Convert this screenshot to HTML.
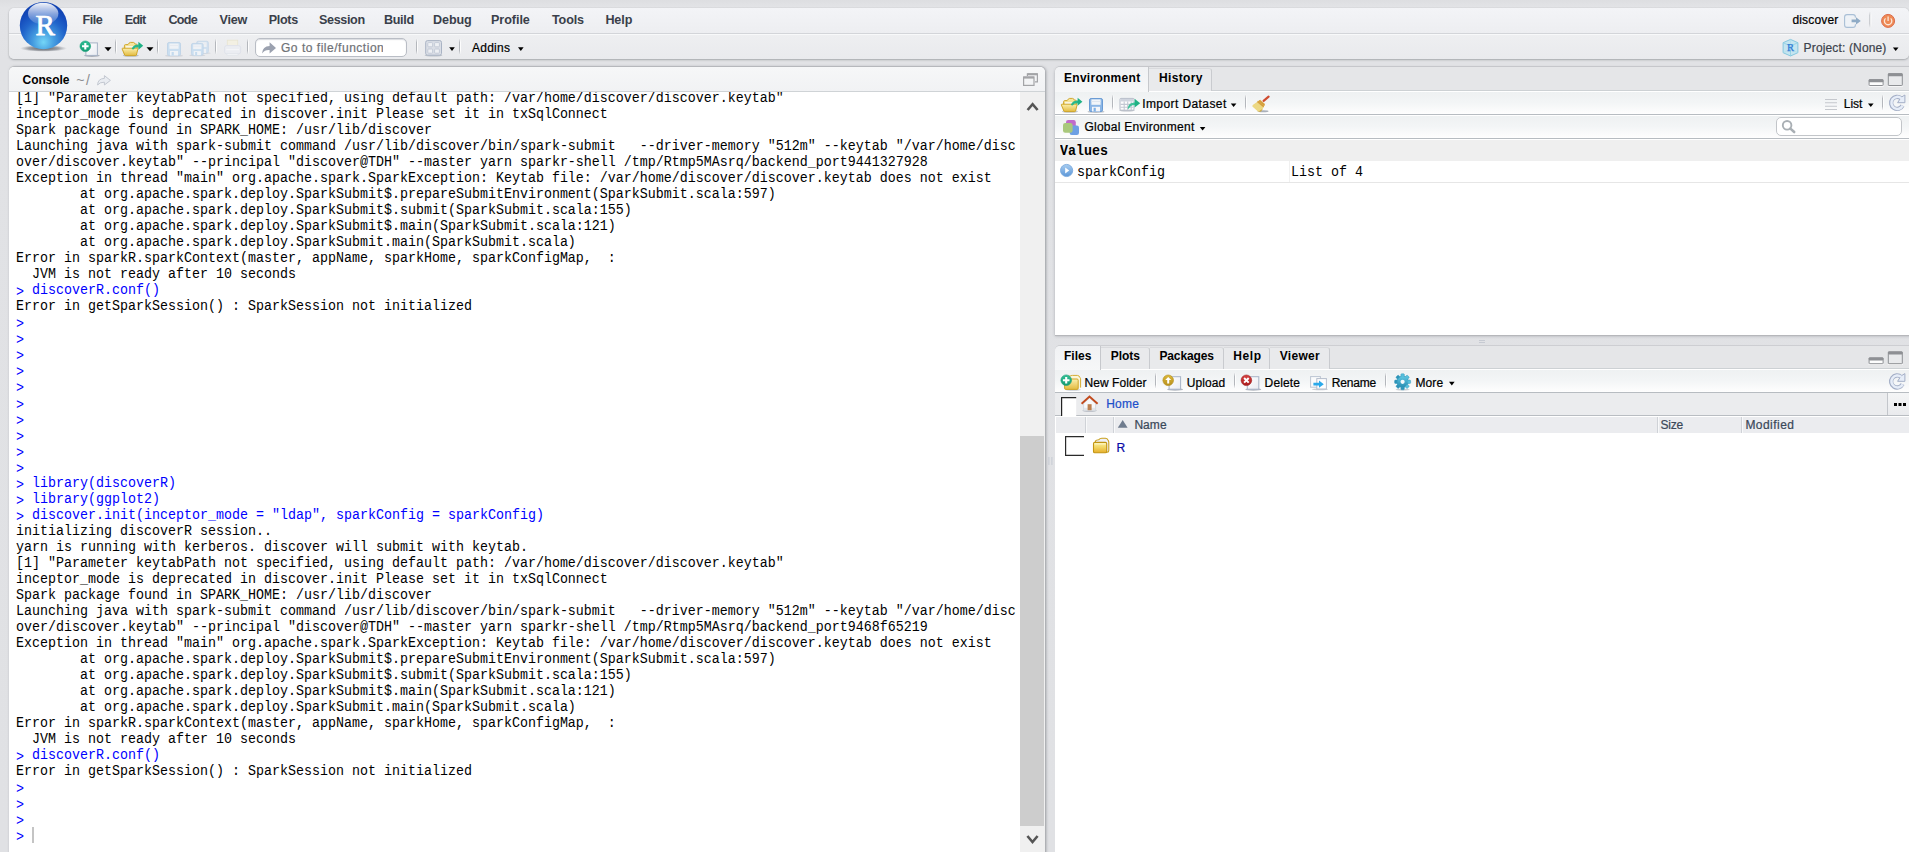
<!DOCTYPE html>
<html>
<head>
<meta charset="utf-8">
<title>RStudio</title>
<style>
*{box-sizing:border-box;margin:0;padding:0}
html,body{width:1909px;height:852px;overflow:hidden}
body{position:relative;font-family:"Liberation Sans",sans-serif;font-size:12px;color:#000;
 background:linear-gradient(to bottom,#dddee1 0,#e3e4e7 8px,#e1e2e5 60px,#e0e1e4 100%);}
.abs{position:absolute}
.t{position:absolute;white-space:pre;line-height:16px}
.b{font-weight:bold}
/* top toolbar */
#tb{left:9px;top:8px;width:1900px;height:51px;border-radius:5px;background:linear-gradient(to bottom,#f3f4f7 0,#edeef1 25px,#eeeff1 26px,#e9eaed 100%);box-shadow:0 1px 2px rgba(120,124,130,.55),0 0 1px rgba(140,144,150,.5)}
#tbline{left:9px;top:33px;width:1900px;height:1px;background:#d3d5d9}
#tbline2{left:9px;top:34px;width:1900px;height:1px;background:#f8f9fa}
.menu{font-size:12.6px;font-weight:bold;color:#3a3f4a}
.s12{font-size:12px;-webkit-text-stroke:.22px currentColor}
.s12b{font-size:12px;font-weight:bold}
.s14{font-size:14px}
.sep{position:absolute;width:1px;background:#cfd1d5}
/* panels */
.panel{position:absolute;background:#fff;overflow:hidden}
.hdr{position:absolute;left:0;top:0;right:0}
.mono{font-family:"Liberation Mono",monospace;font-size:13.33px;transform:scaleY(1.1);transform-origin:0 100%}
#con{left:9px;top:67px;width:1036px;height:800px;border-radius:5px 5px 0 0;box-shadow:1px 0 3px rgba(100,104,110,.6),0 -1px 0 #cdced2}
#conhdr{height:25px;background:linear-gradient(to bottom,#f6f7f8,#f1f2f4);border-bottom:1px solid #cfd3d6}
#context{position:absolute;left:7px;top:25px;width:1010px;height:780px;overflow:hidden}
#context pre{position:absolute;left:0;top:-1.8px;font-family:"Liberation Mono",monospace;font-size:13.33px;line-height:15px;color:#000;transform:scaleY(1.0688);transform-origin:0 0}
#context pre i{font-style:normal;color:#0000ff}
#context pre b{font-weight:normal;position:relative;top:1.6px}
#sb{position:absolute;left:1011px;top:25px;width:25px;height:780px;background:#f0f0f0}
#thumb{position:absolute;left:0;top:344px;width:24px;height:390px;background:#cdcdcd}
.tabbar{position:absolute;left:0;top:0;right:0;height:24px;background:#e5e6e8;border-bottom:1px solid #cdd1d4}
.tab{position:absolute;top:1px;height:23px;border-right:1px solid #c9cbcf;border-top:1px solid #d9dadd;border-radius:0 3px 0 0;background:#e9eaec}
.tab.act{background:linear-gradient(to bottom,#f1f2f4,#f6f7f8);height:25px;top:0;border-top:none;border-radius:4px 0 0 0;z-index:2;border-right:none;box-shadow:1px 0 0 #c6c8cc}
.tool{position:absolute;left:0;right:0;background:linear-gradient(to bottom,#fff 0,#fff 1px,#eef1f2 1px,#f3f5f6 50%,#fdfdfd 95%,#fff 100%);border-bottom:1px solid #b7bcc1}
.colsep{position:absolute;top:71px;width:2px;height:16px;background:linear-gradient(to right,#cfd2d7 0,#cfd2d7 50%,#f8f9fa 50%,#f8f9fa 100%)}
</style>
</head>
<body>
<div class="abs" id="tb"></div>
<div class="abs" id="tbline"></div>
<div class="abs" id="tbline2"></div>

<div class="abs" style="left:255px;top:38px;width:152px;height:19px;border:1px solid #b9bdc5;border-radius:5px;background:#fff;box-shadow:inset 0 1px 1px rgba(150,155,165,.35)"></div>
<div class="panel" id="con">
 <div class="hdr" id="conhdr"></div>
  <div id="context"><pre>[1] "Parameter keytabPath not specified, using default path: /var/home/discover/discover.keytab"
inceptor_mode is deprecated in discover.init Please set it in txSqlConnect
Spark package found in SPARK_HOME: /usr/lib/discover
Launching java with spark-submit command /usr/lib/discover/bin/spark-submit   --driver-memory "512m" --keytab "/var/home/disc
over/discover.keytab" --principal "discover@TDH" --master yarn sparkr-shell /tmp/Rtmp5MAsrq/backend_port9441327928
Exception in thread "main" org.apache.spark.SparkException: Keytab file: /var/home/discover/discover.keytab does not exist
        at org.apache.spark.deploy.SparkSubmit$.prepareSubmitEnvironment(SparkSubmit.scala:597)
        at org.apache.spark.deploy.SparkSubmit$.submit(SparkSubmit.scala:155)
        at org.apache.spark.deploy.SparkSubmit$.main(SparkSubmit.scala:121)
        at org.apache.spark.deploy.SparkSubmit.main(SparkSubmit.scala)
Error in sparkR.sparkContext(master, appName, sparkHome, sparkConfigMap,  :
  JVM is not ready after 10 seconds
<i><b>&gt;</b> discoverR.conf()</i>
Error in getSparkSession() : SparkSession not initialized
<i><b>&gt;</b></i>
<i><b>&gt;</b></i>
<i><b>&gt;</b></i>
<i><b>&gt;</b></i>
<i><b>&gt;</b></i>
<i><b>&gt;</b></i>
<i><b>&gt;</b></i>
<i><b>&gt;</b></i>
<i><b>&gt;</b></i>
<i><b>&gt;</b></i>
<i><b>&gt;</b> library(discoverR)</i>
<i><b>&gt;</b> library(ggplot2)</i>
<i><b>&gt;</b> discover.init(inceptor_mode = "ldap", sparkConfig = sparkConfig)</i>
initializing discoverR session..
yarn is running with kerberos. discover will submit with keytab.
[1] "Parameter keytabPath not specified, using default path: /var/home/discover/discover.keytab"
inceptor_mode is deprecated in discover.init Please set it in txSqlConnect
Spark package found in SPARK_HOME: /usr/lib/discover
Launching java with spark-submit command /usr/lib/discover/bin/spark-submit   --driver-memory "512m" --keytab "/var/home/disc
over/discover.keytab" --principal "discover@TDH" --master yarn sparkr-shell /tmp/Rtmp5MAsrq/backend_port9468f65219
Exception in thread "main" org.apache.spark.SparkException: Keytab file: /var/home/discover/discover.keytab does not exist
        at org.apache.spark.deploy.SparkSubmit$.prepareSubmitEnvironment(SparkSubmit.scala:597)
        at org.apache.spark.deploy.SparkSubmit$.submit(SparkSubmit.scala:155)
        at org.apache.spark.deploy.SparkSubmit$.main(SparkSubmit.scala:121)
        at org.apache.spark.deploy.SparkSubmit.main(SparkSubmit.scala)
Error in sparkR.sparkContext(master, appName, sparkHome, sparkConfigMap,  :
  JVM is not ready after 10 seconds
<i><b>&gt;</b> discoverR.conf()</i>
Error in getSparkSession() : SparkSession not initialized
<i><b>&gt;</b></i>
<i><b>&gt;</b></i>
<i><b>&gt;</b></i>
<i><b>&gt;</b></i></pre></div>
 <div class="abs" style="left:23px;top:760px;width:2px;height:16px;background:#c4c4c4"></div>
 <div id="sb"><div id="thumb"></div></div>
</div>
<div class="panel" id="env" style="left:1055px;top:67px;width:860px;height:268px;border-radius:5px 0 0 0;box-shadow:0 1px 0 #b6b7bb,0 1px 3px rgba(100,104,110,.45),0 -1px 0 #cdced2">
 <div class="tabbar"></div>
 <div class="tab act" style="left:0;width:93px"></div>
 <div class="tab" style="left:94px;width:63px"></div>
 <div class="tool" style="top:24px;height:24px"></div>
 <div class="tool" style="top:48px;height:24px"></div>
 <div class="abs" style="left:721px;top:50px;width:126px;height:19px;border:1px solid #c2c5c9;border-radius:5px;background:#fff"></div>
 <div class="abs" style="left:0;top:73px;right:0;height:21px;background:#efefef"></div>
 <span class="t mono b" style="left:5px;top:77.5px">Values</span>
 <div class="abs" style="left:0;top:115px;right:0;height:1px;background:#e6e6e6"></div>
 <div class="abs" style="left:234px;top:94px;width:1px;height:21px;background:#f0f0f0"></div>
 <span class="t mono" style="left:22px;top:99px">sparkConfig</span>
 <span class="t mono" style="left:236px;top:99px">List of 4</span>
</div>
<div class="panel" id="files" style="left:1055px;top:346px;width:860px;height:520px;border-radius:5px 0 0 0;box-shadow:0 -1px 0 #cdced2">
 <div class="tabbar" style="height:23px"></div>
 <div class="tab act" style="left:0;width:45px;height:24px"></div>
 <div class="tab" style="left:46px;width:49px;height:22px"></div>
 <div class="tab" style="left:95px;width:74px;height:22px"></div>
 <div class="tab" style="left:169px;width:46px;height:22px"></div>
 <div class="tab" style="left:215px;width:60px;height:22px"></div>
 <div class="tool" style="top:23px;height:24px"></div>
 <div class="abs" style="left:0;top:47px;right:0;height:23px;background:#ebecee;border-bottom:1px solid #b9bdc2"></div>
 <div class="abs" style="left:832px;top:47px;width:30px;height:22px;border-left:1px solid #c3c6cb;background:linear-gradient(to bottom,#f4f5f6,#e9eaed)"></div>
 <div class="abs" style="left:839px;top:57px;width:3px;height:3px;background:#000;box-shadow:4.5px 0 0 #000,9px 0 0 #000"></div>
 <div class="abs" style="left:1px;top:71px;right:0;height:16px;background:#ebecef"></div>
 <div class="colsep" style="left:30px"></div><div class="colsep" style="left:58px"></div><div class="colsep" style="left:602px"></div><div class="colsep" style="left:686px"></div>
</div>
<div id="textlayer" style="position:relative;z-index:5">
<span class="t menu" id="m_file" style="left:82.40px;top:11.90px;letter-spacing:-0.420px">File</span>
<span class="t menu" id="m_edit" style="left:124.80px;top:11.90px;letter-spacing:-0.810px">Edit</span>
<span class="t menu" id="m_code" style="left:168.40px;top:11.90px;letter-spacing:-0.720px">Code</span>
<span class="t menu" id="m_view" style="left:219.40px;top:11.90px;letter-spacing:-0.150px">View</span>
<span class="t menu" id="m_plots" style="left:268.80px;top:11.90px;letter-spacing:-0.360px">Plots</span>
<span class="t menu" id="m_session" style="left:319.00px;top:11.90px;letter-spacing:-0.360px">Session</span>
<span class="t menu" id="m_build" style="left:384.00px;top:11.90px;letter-spacing:-0.338px">Build</span>
<span class="t menu" id="m_debug" style="left:433.00px;top:11.90px;letter-spacing:-0.090px">Debug</span>
<span class="t menu" id="m_profile" style="left:491.00px;top:11.90px;letter-spacing:-0.060px">Profile</span>
<span class="t menu" id="m_tools" style="left:552.00px;top:11.90px;letter-spacing:-0.157px">Tools</span>
<span class="t menu" id="m_help" style="left:605.40px;top:11.90px;letter-spacing:-0.120px">Help</span>
<span class="t s12" id="t_addins" style="left:472.00px;top:39.80px;letter-spacing:0.252px">Addins</span>
<span class="t s12" id="t_user" style="left:1792.40px;top:11.80px;letter-spacing:0.167px">discover</span>
<span class="t s12" id="t_proj" style="left:1803.60px;top:39.90px;letter-spacing:0.148px;color:#3d434d">Project: (None)</span>
<span class="t s12b" id="t_console" style="left:22.60px;top:71.70px;letter-spacing:-0.105px">Console</span>
<span class="t s14" id="t_cwd" style="left:76.20px;top:71.70px;letter-spacing:1.710px;color:#8b8d90">~/</span>
<span class="t s12b" id="t_env" style="left:1064.00px;top:70.10px;letter-spacing:0.279px">Environment</span>
<span class="t s12b" id="t_hist" style="left:1159.00px;top:70.10px;letter-spacing:0.330px">History</span>
<span class="t s12" id="t_import" style="left:1142.20px;top:95.80px;letter-spacing:0.415px">Import Dataset</span>
<span class="t s12" id="t_list" style="left:1843.80px;top:96.00px;letter-spacing:-0.030px">List</span>
<span class="t s12" id="t_genv" style="left:1084.40px;top:118.70px;letter-spacing:0.265px">Global Environment</span>
<span class="t s12b" id="t_files" style="left:1064.00px;top:347.90px;letter-spacing:0.000px">Files</span>
<span class="t s12b" id="t_plots" style="left:1110.80px;top:347.90px;letter-spacing:-0.068px">Plots</span>
<span class="t s12b" id="t_pkgs" style="left:1159.40px;top:347.90px;letter-spacing:-0.103px">Packages</span>
<span class="t s12b" id="t_help" style="left:1233.20px;top:347.90px;letter-spacing:0.600px">Help</span>
<span class="t s12b" id="t_viewer" style="left:1279.80px;top:347.90px;letter-spacing:0.270px">Viewer</span>
<span class="t s12" id="t_newf" style="left:1084.40px;top:375.00px;letter-spacing:0.090px">New Folder</span>
<span class="t s12" id="t_upload" style="left:1186.80px;top:375.00px;letter-spacing:0.054px">Upload</span>
<span class="t s12" id="t_delete" style="left:1264.60px;top:375.00px;letter-spacing:0.126px">Delete</span>
<span class="t s12" id="t_rename" style="left:1331.80px;top:375.00px;letter-spacing:-0.198px">Rename</span>
<span class="t s12" id="t_more" style="left:1415.40px;top:375.00px;letter-spacing:0.120px">More</span>
<span class="t s12" id="t_home" style="left:1106.20px;top:395.90px;letter-spacing:0.270px;color:#1c4fca">Home</span>
<span class="t s12" id="t_name" style="left:1134.40px;top:416.60px;letter-spacing:0.060px;color:#3a4859">Name</span>
<span class="t s12" id="t_size" style="left:1660.40px;top:416.60px;letter-spacing:-0.210px;color:#3a4859">Size</span>
<span class="t s12" id="t_mod" style="left:1745.40px;top:416.60px;letter-spacing:0.463px;color:#3a4859">Modified</span>
<span class="t s12" id="t_r" style="left:1116.60px;top:439.80px;letter-spacing:0.000px;color:#0b0ba8">R</span>
<span class="t s12" id="t_goto" style="left:281px;top:40px;color:#6f7276;width:102px;overflow:hidden;letter-spacing:.52px">Go to file/function</span>
</div>
<svg class="abs" id="ov" style="left:0;top:0;pointer-events:none;z-index:6" width="1909" height="852" viewBox="0 0 1909 852">
<defs>
 <radialGradient id="gBall" cx="0.5" cy="0.82" r="0.75" fx="0.5" fy="0.85">
  <stop offset="0" stop-color="#74d6f7"/><stop offset="0.3" stop-color="#459ce0"/><stop offset="0.62" stop-color="#2165cb"/><stop offset="0.85" stop-color="#154cbc"/><stop offset="1" stop-color="#1042b2"/>
 </radialGradient>
 <linearGradient id="gHi" x1="0" y1="0" x2="0" y2="1">
  <stop offset="0" stop-color="#fff" stop-opacity="0.95"/><stop offset="0.5" stop-color="#fff" stop-opacity="0.5"/><stop offset="1" stop-color="#fff" stop-opacity="0.1"/>
 </linearGradient>
 <radialGradient id="gSh" cx="0.5" cy="0.5" r="0.5"><stop offset="0" stop-color="#44484f" stop-opacity="0.9"/><stop offset="0.65" stop-color="#60646c" stop-opacity="0.55"/><stop offset="1" stop-color="#80848c" stop-opacity="0"/></radialGradient>
 <linearGradient id="gPage" x1="0" y1="0" x2="1" y2="1"><stop offset="0" stop-color="#ffffff"/><stop offset="1" stop-color="#e9ecf2"/></linearGradient>
 <linearGradient id="gFold" x1="0" y1="0" x2="0" y2="1"><stop offset="0" stop-color="#fbefae"/><stop offset="1" stop-color="#e3bb3f"/></linearGradient>
 <linearGradient id="gFoldB" x1="0" y1="0" x2="0" y2="1"><stop offset="0" stop-color="#f6e6a0"/><stop offset="1" stop-color="#f2dc84"/></linearGradient>
 <linearGradient id="gSep" x1="0" y1="0" x2="0" y2="1"><stop offset="0" stop-color="#b4b7bc" stop-opacity="0"/><stop offset="0.25" stop-color="#b4b7bc"/><stop offset="0.75" stop-color="#b4b7bc"/><stop offset="1" stop-color="#b4b7bc" stop-opacity="0"/></linearGradient>
 <linearGradient id="gSepW" x1="0" y1="0" x2="0" y2="1"><stop offset="0" stop-color="#fff" stop-opacity="0"/><stop offset="0.25" stop-color="#fff" stop-opacity=".9"/><stop offset="0.75" stop-color="#fff" stop-opacity=".9"/><stop offset="1" stop-color="#fff" stop-opacity="0"/></linearGradient>
 <linearGradient id="gGreen" x1="0" y1="0" x2="0" y2="1"><stop offset="0" stop-color="#2fbf94"/><stop offset="1" stop-color="#149a72"/></linearGradient>
 <linearGradient id="gGold" x1="0" y1="0" x2="0" y2="1"><stop offset="0" stop-color="#dcb93a"/><stop offset="1" stop-color="#b8901c"/></linearGradient>
 <linearGradient id="gRed" x1="0" y1="0" x2="0" y2="1"><stop offset="0" stop-color="#d84040"/><stop offset="1" stop-color="#a81c1c"/></linearGradient>
 <linearGradient id="gGear" x1="0" y1="0" x2="0" y2="1"><stop offset="0" stop-color="#5cc4e0"/><stop offset="1" stop-color="#2a8fb4"/></linearGradient>
 <linearGradient id="gPlay" x1="0" y1="0" x2="0" y2="1"><stop offset="0" stop-color="#a8cdf0"/><stop offset="1" stop-color="#5b96d8"/></linearGradient>
 <linearGradient id="gFold2" x1="0" y1="0" x2="0" y2="1"><stop offset="0" stop-color="#fbf1a0"/><stop offset="0.5" stop-color="#f2d562"/><stop offset="1" stop-color="#e6ae2a"/></linearGradient>
 <g id="dd"><path d="M0,0H7L3.5,4Z" fill="#000"/></g>
 <g id="dds"><path d="M0,0H5.6L2.8,3.6Z" fill="#000"/></g>
 <g id="sep"><rect x="0" y="0" width="1" height="16" fill="url(#gSep)"/><rect x="1" y="0" width="1" height="16" fill="url(#gSepW)"/></g>
  <g id="pg"><ellipse cx="6.5" cy="13.2" rx="8" ry="1.3" fill="#5a6678" opacity=".45"/><rect x="0.5" y="0.5" width="11.5" height="12.5" fill="url(#gPage)" stroke="#a7b3c6" stroke-width="1"/></g>
  <g id="fopen">
  <ellipse cx="9" cy="14" rx="8" ry="1.1" fill="#5a6678" opacity=".35"/>
  <path d="M2.6,12.8V4.2Q2.6,3 3.8,3H6.2Q7,1.2 8.6,0.8H11.6Q13,1 13.4,2.6H14.6Q15.4,2.7 15.4,3.6V6.6" fill="url(#gFoldB)" stroke="#d0a82e" stroke-width="1"/>
  <path d="M4,4.6H14V7H4Z" fill="#fbfbf6"/>
  <path d="M0.9,6.6H15.4Q16.3,6.6 16,7.5L14.6,13.4Q14.4,14 13.7,14H3.8Q3.1,14 2.9,13.4L0.4,7.5Q0.1,6.6 0.9,6.6Z" fill="url(#gFold)" stroke="#cfa528" stroke-width="1"/>
  <path d="M9.8,7.4Q11.4,3 17,3V5.8Q13.2,5.4 11.6,7.8Z" fill="#2ab88a"/>
  <path d="M16.6,0.2L21.4,4.2L16.6,8.2Z" fill="#1fb184"/>
 </g>
  <g id="floppy">
  <ellipse cx="7" cy="13.8" rx="8.5" ry="1.1" fill="#5a6678" opacity=".4"/>
  <rect x="0.5" y="0.5" width="13" height="13" rx="1.6" fill="#8bb6e6" stroke="#6a9bd4"/>
  <rect x="2.4" y="1.4" width="9.2" height="5.4" fill="#f2f5f9"/>
  <rect x="2.4" y="3" width="9.2" height="1" fill="#dfe6ee"/>
  <rect x="3" y="8.8" width="8" height="4.7" fill="#f4f6fa"/>
  <rect x="4.6" y="9.8" width="2.2" height="3.7" fill="#7fb0e4"/>
 </g>
 <g id="floppyD">
  <ellipse cx="7" cy="13.8" rx="9" ry="1" fill="#8a94a4" opacity=".25"/>
  <rect x="0.5" y="0.5" width="13" height="13" rx="1.6" fill="#cadef0" stroke="#c1d5e8"/>
  <rect x="2.4" y="1.6" width="9.2" height="5.2" fill="#eff2f6"/>
  <rect x="2.4" y="3" width="9.2" height="1" fill="#e6eaf0"/>
  <rect x="3" y="9" width="8" height="4.5" fill="#f0f3f7"/>
  <rect x="4.6" y="10" width="2.2" height="3.5" fill="#c4daee"/>
 </g>
  <g id="bPlus"><circle r="5.3" fill="url(#gGreen)" stroke="#16a077" stroke-width=".6"/><path d="M-3.3,0H3.3M0,-3.3V3.3" stroke="#fff" stroke-width="2.1"/></g>
 <g id="bUp"><circle r="5.3" fill="url(#gGold)" stroke="#b08a18" stroke-width=".6"/><path d="M0,-3.4L3,-0.2H1V3.2H-1V-0.2H-3Z" fill="#fff"/></g>
 <g id="bX"><circle r="5.3" fill="url(#gRed)" stroke="#a02020" stroke-width=".6"/><path d="M-2.3,-2.3L2.3,2.3M2.3,-2.3L-2.3,2.3" stroke="#fff" stroke-width="2"/></g>
  <g id="wmin"><rect x="0" y="6.6" width="15" height="1" fill="#fff" opacity=".8"/><rect x="0.5" y="0.5" width="14" height="5.8" rx=".6" fill="#fdfdfd" stroke="#8e9094" stroke-width="1"/><rect x="0.2" y="0" width="14.6" height="3" rx=".8" fill="#8e9094"/></g>
 <g id="wmax"><rect x="0" y="12.6" width="15" height="1" fill="#fff" opacity=".8"/><rect x="0.5" y="0.5" width="14" height="11.8" rx=".6" fill="#e9eaec" stroke="#8e9094" stroke-width="1"/><rect x="0.2" y="0" width="14.6" height="3" rx=".8" fill="#8e9094"/></g>
 <g id="refresh" fill="none">
  <path d="M13.9,10.7A6,6 0 1 1 12.5,3.6" stroke="#a3aec6" stroke-width="4.3"/>
  <path d="M9,7.9H16.3V0.2L12.4,2.6Z" fill="#e6edf8" stroke="#a3aec6" stroke-width="1" stroke-linejoin="round"/>
  <path d="M14.1,10.9A6,6 0 1 1 12.7,3.5" stroke="#e6edf8" stroke-width="2.5"/>
  <path d="M11.2,6.2L15.4,1.8V7Z" fill="#e6edf8"/>
 </g>
</defs>
<ellipse cx="43.5" cy="48.4" rx="23.5" ry="3.4" fill="url(#gSh)"/>
<circle cx="43.5" cy="25.6" r="23.7" fill="url(#gBall)"/>
<ellipse cx="43.2" cy="13.6" rx="15.2" ry="10.8" fill="url(#gHi)"/>
<text x="45.2" y="35.1" text-anchor="middle" font-family="Liberation Serif" font-size="29" fill="#fff" stroke="#fff" stroke-width=".75">R</text>
<use href="#pg" x="85.4" y="42.4"/>
<use href="#bPlus" x="85.3" y="46.3"/>
<use href="#dd" x="104.5" y="47.3"/>
<use href="#sep" x="115" y="38.5"/>
<use href="#fopen" x="121.8" y="41.6"/>
<use href="#dd" x="146.5" y="47.3"/>
<use href="#sep" x="157" y="38.5"/>
<use href="#floppyD" x="167" y="42"/>
<use href="#floppyD" transform="translate(196.2,40.8) scale(.9)" opacity=".8"/>
<use href="#floppyD" transform="translate(191,43) scale(.9)"/>
<use href="#sep" x="215" y="38.5"/>
<g opacity=".9">
 <rect x="227.3" y="40.2" width="10.4" height="7" fill="#f4f1e2" stroke="#e8e4cf" stroke-width=".8"/>
 <rect x="224.6" y="45.6" width="16" height="8.2" rx="2" fill="#eceef3" stroke="#dfe2ea" stroke-width="1"/>
 <rect x="226.2" y="49.2" width="12.8" height="1" fill="#f7f8fa"/>
 <rect x="227" y="53.4" width="11" height="2.2" fill="#f1f3f6" stroke="#e1e4ea" stroke-width=".7"/>
</g>
<use href="#sep" x="247" y="38.5"/>
<path d="M262,53.4Q262.6,46.2 269.6,46V42.2L276,48L269.6,53.6V50Q264.8,49.6 262,53.4Z" fill="#9ba1af"/>
<use href="#sep" x="416" y="38.5"/>
<g>
 <ellipse cx="433.5" cy="55.5" rx="9" ry=".9" fill="#5a6678" opacity=".3"/>
 <rect x="425.7" y="40.6" width="15.8" height="14.6" rx="1.8" fill="#dadee6" stroke="#a9b3c4" stroke-width="1"/>
 <rect x="427.8" y="42.6" width="4.8" height="4.2" rx=".8" fill="#eef0f4" stroke="#bcc4d2" stroke-width=".8"/>
 <rect x="434.6" y="42.6" width="4.8" height="4.2" rx=".8" fill="#eef0f4" stroke="#bcc4d2" stroke-width=".8"/>
 <rect x="427.8" y="49" width="4.8" height="4.2" rx=".8" fill="#eef0f4" stroke="#bcc4d2" stroke-width=".8"/>
 <rect x="434.6" y="49" width="4.8" height="4.2" rx=".8" fill="#eef0f4" stroke="#bcc4d2" stroke-width=".8"/>
</g>
<use href="#dds" x="449.2" y="47.3"/>
<use href="#sep" x="459" y="38.5"/>
<use href="#dds" x="518" y="47.3"/>
<rect x="1844.6" y="14.6" width="10.8" height="12.8" rx="2.4" fill="#eef2f7" stroke="#a9bfd6" stroke-width="1.1"/>
<rect x="1851" y="17.6" width="6" height="6.6" fill="#eef0f3"/>
<path d="M1851.6,19.6H1856V17.2L1860.8,20.9L1856,24.6V22.2H1851.6Z" fill="#8fabc6"/>
<rect x="1869.4" y="11.4" width="1" height="16.4" fill="url(#gSep)"/><rect x="1870.4" y="11.4" width="1" height="16.4" fill="url(#gSepW)"/>
<circle cx="1888.1" cy="20.9" r="6.5" fill="#ee8a55" stroke="#dc6c4c" stroke-width="1"/>
<path d="M1885.5,18.4A3.7,3.7 0 1 0 1890.7,18.4" fill="none" stroke="#fbe6da" stroke-width="1.3"/>
<path d="M1888.1,16.4V21" stroke="#fbe6da" stroke-width="1.3"/>
<g>
 <path d="M1790.5,39.4L1797.9,42.7V52.7L1790.5,56L1783.1,52.7V42.7Z" fill="#c4e5f0" stroke="#7cc3dc" stroke-width=".9"/>
 <path d="M1783.1,42.7L1790.5,46L1797.9,42.7M1790.5,46V56" stroke="#8fcfe2" stroke-width=".8" fill="none"/>
 <path d="M1783.1,52.7L1790.5,49.4L1797.9,52.7M1790.5,39.4V49.4" stroke="#a6d9e8" stroke-width=".6" fill="none" opacity=".8"/>
 <text x="1790.6" y="50.8" text-anchor="middle" font-family="Liberation Serif" font-size="10.5" fill="#2f7bd6" stroke="#2f7bd6" stroke-width=".25">R</text>
</g>
<use href="#dds" x="1892.9" y="47.4"/>
<path d="M97.6,85Q97.8,78.6 104.4,78.4V75.6L110.4,80.4L104.4,85V82.2Q99.8,82 97.6,85Z" fill="#e9ecf1" stroke="#c3c8d1" stroke-width="1"/>
<g fill="none" stroke="#a3a4a7" stroke-width="1.2">
 <path d="M1027.4,76V73.8H1037.4V81.8H1035" />
 <path d="M1027.4,74.3H1037.4" stroke-width="2"/>
 <rect x="1023.6" y="77" width="10.4" height="8.4"/>
 <path d="M1023.6,77.6H1034" stroke-width="2"/>
</g>
<path d="M1027.6,110L1032.6,104.2L1037.6,110" fill="none" stroke="#555" stroke-width="2.6" stroke-linejoin="miter"/>
<path d="M1027.4,836L1032.5,842L1037.6,836" fill="none" stroke="#555" stroke-width="2.6" stroke-linejoin="miter"/>
<rect x="1048.4" y="457" width="1" height="8" fill="#c6cad2"/><rect x="1051.4" y="457" width="1" height="8" fill="#c6cad2"/>
<rect x="1479" y="340" width="6" height="1" fill="#c6cad2"/><rect x="1479" y="342" width="6" height="1" fill="#c6cad2"/>
<use href="#wmin" x="1868.6" y="79.2"/>
<use href="#wmax" x="1887.8" y="73.2"/>
<use href="#fopen" x="1061" y="97.6"/>
<use href="#floppy" x="1089" y="98"/>
<use href="#sep" x="1112" y="94.5"/>
<g>
 <ellipse cx="1127" cy="110.6" rx="8" ry=".9" fill="#5a6678" opacity=".4"/>
 <rect x="1120" y="98.4" width="14" height="11.8" rx="1" fill="#fdfdfe" stroke="#b4bac6" stroke-width="1"/>
 <rect x="1120.5" y="98.9" width="13" height="2.6" fill="#cfd4de"/>
 <path d="M1120.5,104.4H1133.5M1120.5,107.3H1133.5M1124.2,101.5V110M1127.7,101.5V110M1131.2,101.5V110" stroke="#c3c8d3" stroke-width="1.1"/>
 <path d="M1127.6,108.6Q1128.6,102.2 1135,102.6V105Q1130.6,104.6 1128.8,108.8Z" fill="#3fc29a"/>
 <path d="M1134.6,98.8L1140.2,103.3L1134.6,107.4Z" fill="#1fb184"/>
</g>
<use href="#dds" x="1230.8" y="103.4"/>
<use href="#sep" x="1245" y="94.5"/>
<g>
 <ellipse cx="1263" cy="111.3" rx="5.5" ry="1" fill="#5a6678" opacity=".5"/>
 <path d="M1268.6,96.6L1263.6,100.8" stroke="#cf4c30" stroke-width="2.2" stroke-linecap="round"/>
 <path d="M1259.6,100.2L1264.8,104.4L1262.4,109.6Q1260.4,112.4 1258,111.6L1252.4,106.4Q1252,105.2 1253.4,104.4Z" fill="#ecd883"/>
 <path d="M1256.8,102L1260.2,99.8L1265,104L1263.4,107.4Z" fill="#dba94a"/>
 <path d="M1257.6,101.4L1263.8,106.6M1259,100.6L1264.6,105.2" stroke="#c9922f" stroke-width=".7" fill="none" opacity=".8"/>
 <path d="M1258.4,111.8L1262.8,108.8L1261,111.4Z" fill="#c9a03c"/>
</g>
<path d="M1825,99.5H1837M1825,102.8H1837M1825,106.2H1837M1825,109.5H1837" stroke="#c5c8cd" stroke-width="1.1"/>
<use href="#dds" x="1868" y="103.4"/>
<use href="#sep" x="1882" y="94.5"/>
<use href="#refresh" x="1888.6" y="94.8"/>
<rect x="1066" y="120" width="9.8" height="9.6" rx="2.2" fill="#c06ccb"/>
<rect x="1069.6" y="125.4" width="9.4" height="9.6" rx="2.2" fill="#6da0e4"/>
<rect x="1063" y="123" width="9.6" height="9.8" rx="2.2" fill="#a9c87c"/>
<use href="#dds" x="1199.8" y="127"/>
<circle cx="1787.1" cy="125.3" r="4.3" fill="none" stroke="#a9afb4" stroke-width="1.9"/>
<path d="M1790.4,128.6L1794.2,132" stroke="#a9afb4" stroke-width="2.6" stroke-linecap="round"/>
<circle cx="1066.6" cy="170.5" r="6.1" fill="url(#gPlay)" stroke="#7aa9dc" stroke-width=".9"/>
<path d="M1065.2,167.6L1069.2,170.6L1065.2,173.6Z" fill="#fff"/>
<use href="#wmin" x="1868.6" y="357.4"/>
<use href="#wmax" x="1887.8" y="351.4"/>
<use href="#refresh" x="1888.6" y="373.4"/>
<g>
 <ellipse cx="1073" cy="389.8" rx="8" ry=".9" fill="#5a6678" opacity=".3"/>
 <path d="M1067,389V377.4Q1067,376.2 1068.2,376.2H1070Q1071,375.4 1072.4,375.4H1077.4Q1079.4,375.6 1080,377.6Q1080.6,378.2 1080.6,379V387.6" fill="#fbf6d8" stroke="#d4ac32" stroke-width="1"/>
 <rect x="1064.6" y="379" width="13.6" height="10.4" rx="1.2" fill="url(#gFold)" stroke="#cfa528" stroke-width="1"/>
</g>
<use href="#bPlus" x="1066.2" y="380.2"/>
<use href="#sep" x="1155" y="372.5"/>
<use href="#pg" x="1168.6" y="376.2"/>
<use href="#bUp" x="1168.2" y="380.3"/>
<use href="#sep" x="1234" y="372.5"/>
<use href="#pg" x="1246.8" y="376.2"/>
<use href="#bX" x="1246.4" y="380.3"/>
<g>
 <ellipse cx="1320" cy="389.4" rx="8" ry=".9" fill="#5a6678" opacity=".3"/>
 <rect x="1310.6" y="376.6" width="9.8" height="10.6" fill="#fafbfc" stroke="#bcc5d2" stroke-width="1"/>
 <rect x="1316.8" y="378.6" width="9.6" height="10.4" fill="#fdfdfe" stroke="#b4bdcc" stroke-width="1"/>
 <path d="M1313.4,382.8H1319V380.6L1323.8,384.2L1319,387.8V385.6H1313.4Z" fill="#2aa9ea"/>
</g>
<use href="#sep" x="1385" y="372.5"/>
<g transform="translate(1402.6,381.8)">
 <ellipse cx="0" cy="7.9" rx="7" ry=".9" fill="#5a6678" opacity=".3"/>
 <g fill="url(#gGear)" stroke="#3298bc" stroke-width=".5">
  <circle r="5.7"/>
  <g id="teeth"><rect x="-1.7" y="-8" width="3.4" height="16" rx=".8"/><rect x="-1.7" y="-8" width="3.4" height="16" rx=".8" transform="rotate(45)"/><rect x="-1.7" y="-8" width="3.4" height="16" rx=".8" transform="rotate(90)"/><rect x="-1.7" y="-8" width="3.4" height="16" rx=".8" transform="rotate(135)"/></g>
 </g>
 <circle r="5.2" fill="url(#gGear)"/>
 <circle r="2.1" fill="#f4fafc"/>
</g>
<use href="#dds" x="1449" y="381.8"/>
<rect x="1061" y="397" width="15.2" height="19" fill="#fff"/>
<path d="M1061.6,416V397.6H1076.2" fill="none" stroke="#222" stroke-width="1.2"/>
<g>
 <ellipse cx="1089.6" cy="410.8" rx="7.4" ry=".9" fill="#5a6678" opacity=".4"/>
 <path d="M1083.6,403.4L1089.5,398L1095.6,403.4V410.4H1083.6Z" fill="#f7f8f9" stroke="#cdd2d8" stroke-width=".8"/>
 <rect x="1084" y="407.8" width="11.2" height="2.6" fill="#dfe3e8" opacity=".9"/>
 <rect x="1087.6" y="404.2" width="4" height="6" fill="#bb7f4e"/>
 <path d="M1081.6,403.8L1089.5,396.6L1097.6,403.8" fill="none" stroke="#c24a1c" stroke-width="1.9" stroke-linejoin="miter"/>
</g>
<path d="M1117.8,427.8L1122.7,420L1127.6,427.8Z" fill="#6f7c8e"/>
<path d="M1084,436.6H1065.6V455.3H1084" fill="none" stroke="#2a2a2a" stroke-width="1.2"/>
<g>
 <path d="M1095.4,442V441Q1096.2,439.9 1098.8,439.7Q1100,438.3 1101.8,438.2H1105.4Q1107.6,438.4 1108.3,440.6Q1108.8,441.3 1108.8,442.4V450.6Q1108.6,452 1107.2,452.4" fill="#eef0fa" stroke="#c9a01c" stroke-width="1.1"/>
 <rect x="1093.5" y="442.4" width="13.2" height="10.3" rx="1.3" fill="url(#gFold2)" stroke="#c39512" stroke-width="1.1"/>
 <rect x="1094.4" y="443.4" width="11.4" height="1" fill="#fefbd2" opacity=".9"/>
</g>
</svg>

</body>
</html>
